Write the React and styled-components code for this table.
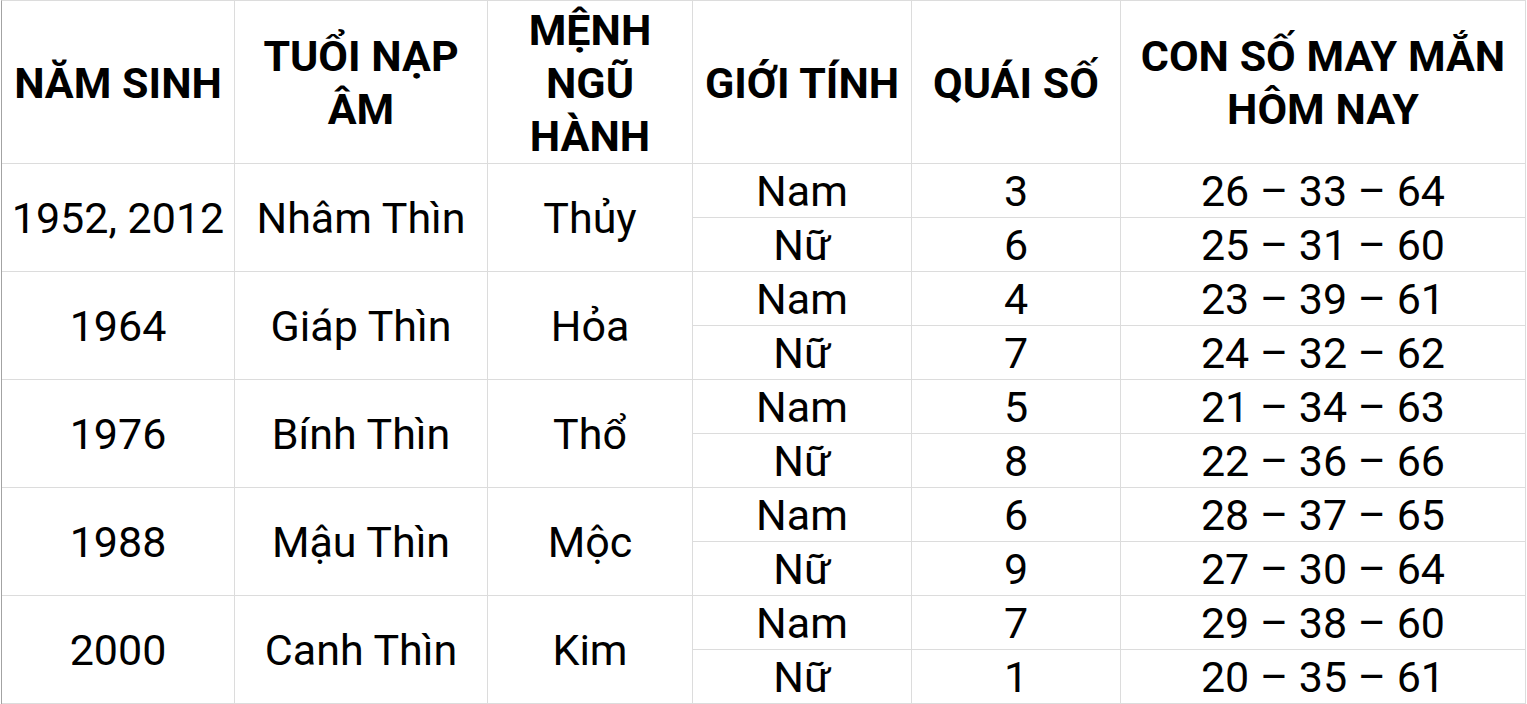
import React from "react";
import styled, { createGlobalStyle } from "styled-components";

const Global = createGlobalStyle`
  html, body { margin: 0; padding: 0; background: #fff; }
  body { font-family: Roboto, "Noto Sans", "Liberation Sans", sans-serif; color: #000; }
`;

const Grid = styled.div`
  display: grid;
  grid-template-columns: 233px 253px 205px 219px 209px 405px;
  grid-template-rows: 163px repeat(10, 54px);
  margin-left: 1px;
  width: max-content;
  border-top: 1px solid #dcdcdc;
  border-left: 1px solid #a3a3a3;
`;

const Cell = styled.div`
  box-sizing: border-box;
  display: flex;
  align-items: center;
  justify-content: center;
  text-align: center;
  border-right: 1px solid #dcdcdc;
  border-bottom: 1px solid #dcdcdc;
  font-size: 43px;
  line-height: 1;
  padding: 1px 2px 0;
  grid-row: ${(p) => (p.$span ? `span ${p.$span}` : "auto")};
  white-space: nowrap;
`;

const HeadCell = styled(Cell)`
  font-weight: 700;
  line-height: 53px;
  white-space: pre-line;
  padding-top: 2px;
`;

const headers = [
  "NĂM SINH",
  "TUỔI NẠP\nÂM",
  "MỆNH\nNGŨ\nHÀNH",
  "GIỚI TÍNH",
  "QUÁI SỐ",
  "CON SỐ MAY MẮN\nHÔM NAY",
];

const data = [
  { year: "1952, 2012", tuoi: "Nhâm Thìn", menh: "Thủy", rows: [["Nam", "3", "26 – 33 – 64"], ["Nữ", "6", "25 – 31 – 60"]] },
  { year: "1964", tuoi: "Giáp Thìn", menh: "Hỏa", rows: [["Nam", "4", "23 – 39 – 61"], ["Nữ", "7", "24 – 32 – 62"]] },
  { year: "1976", tuoi: "Bính Thìn", menh: "Thổ", rows: [["Nam", "5", "21 – 34 – 63"], ["Nữ", "8", "22 – 36 – 66"]] },
  { year: "1988", tuoi: "Mậu Thìn", menh: "Mộc", rows: [["Nam", "6", "28 – 37 – 65"], ["Nữ", "9", "27 – 30 – 64"]] },
  { year: "2000", tuoi: "Canh Thìn", menh: "Kim", rows: [["Nam", "7", "29 – 38 – 60"], ["Nữ", "1", "20 – 35 – 61"]] },
];

export default function App() {
  return (
    <>
      <Global />
      <Grid>
        {headers.map((h) => (
          <HeadCell key={h}>{h}</HeadCell>
        ))}
        {data.map((d) => (
          <React.Fragment key={d.year}>
            <Cell $span={2}>{d.year}</Cell>
            <Cell $span={2}>{d.tuoi}</Cell>
            <Cell $span={2}>{d.menh}</Cell>
            <Cell>{d.rows[0][0]}</Cell>
            <Cell>{d.rows[0][1]}</Cell>
            <Cell>{d.rows[0][2]}</Cell>
            <Cell>{d.rows[1][0]}</Cell>
            <Cell>{d.rows[1][1]}</Cell>
            <Cell>{d.rows[1][2]}</Cell>
          </React.Fragment>
        ))}
      </Grid>
    </>
  );
}
